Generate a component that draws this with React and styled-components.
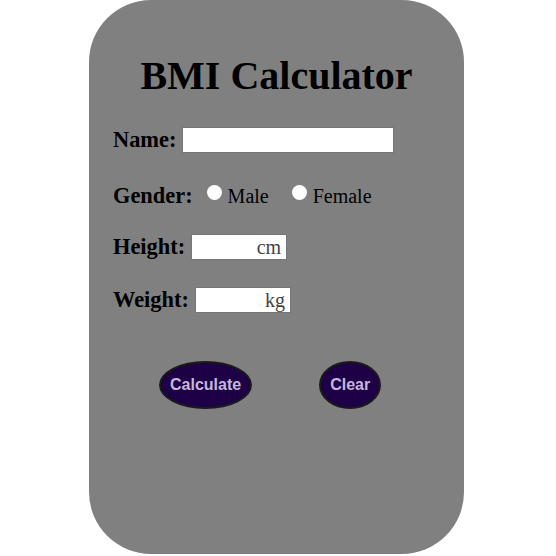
import React from "react";
import styled, { createGlobalStyle } from "styled-components";

const GlobalStyle = createGlobalStyle`
  body {
    margin: 0;
    background: white;
    font-family: "Liberation Serif", "Times New Roman", serif;
  }
`;

const Card = styled.div`
  width: 375px;
  height: 554px;
  margin: 0 0 0 89px;
  padding: 52px 0 0 24px;
  box-sizing: border-box;
  background: #808080;
  border-radius: 62px;
`;

const Title = styled.h1`
  margin: 0 0 28px -24px;
  font-size: 40px;
  font-weight: bold;
  text-align: center;
  color: black;
`;

const Row = styled.div`
  display: flex;
  align-items: center;
  height: 26px;
  margin-top: ${(p) => p.$top || 0}px;
`;

const InlineRow = styled.div`
  height: 26px;
  margin-top: ${(p) => p.$top || 0}px;
  line-height: 26px;
  white-space: nowrap;
`;

const Label = styled.span`
  font-size: 22.4px;
  font-weight: bold;
  margin-right: 6px;
`;

const Field = styled.input`
  box-sizing: border-box;
  width: ${(p) => p.$width}px;
  height: 26px;
  margin: 0;
  padding: 0 5px;
  border: 1px solid #767676;
  background: white;
  font-family: "Liberation Serif", "Times New Roman", serif;
  font-size: 20px;
  text-align: right;
  color: #333;
  &::placeholder {
    color: #444;
  }
`;

const Radio = styled.input`
  appearance: none;
  width: 15px;
  height: 15px;
  margin: 0 6px 3px ${(p) => p.$gap}px;
  border: none;
  border-radius: 50%;
  background: white;
  vertical-align: baseline;
`;

const Option = styled.span`
  font-size: 20px;
`;

const Buttons = styled.div`
  display: flex;
  align-items: center;
  gap: 67px;
  margin-top: 48px;
  padding-left: 46px;
`;

const Pill = styled.button`
  padding: 13px 9px;
  border: 2px solid #1a1a1a;
  border-radius: 50%;
  background: #1d0045;
  color: #c4b6dc;
  font-family: "Liberation Sans", Arial, sans-serif;
  font-size: 16px;
  font-weight: bold;
  cursor: pointer;
`;

export default function App() {
  return (
    <>
      <GlobalStyle />
      <Card>
        <Title>BMI Calculator</Title>
        <Row>
          <Label>Name:</Label>
          <Field $width={212} type="text" />
        </Row>
        <InlineRow $top={30}>
          <Label>Gender:</Label>
          <Radio $gap={8} type="radio" name="gender" />
          <Option>Male</Option>
          <Radio $gap={23} type="radio" name="gender" />
          <Option>Female</Option>
        </InlineRow>
        <Row $top={25}>
          <Label>Height:</Label>
          <Field $width={96} type="text" placeholder="cm" />
        </Row>
        <Row $top={27}>
          <Label>Weight:</Label>
          <Field $width={96} type="text" placeholder="kg" />
        </Row>
        <Buttons>
          <Pill>Calculate</Pill>
          <Pill>Clear</Pill>
        </Buttons>
      </Card>
    </>
  );
}
